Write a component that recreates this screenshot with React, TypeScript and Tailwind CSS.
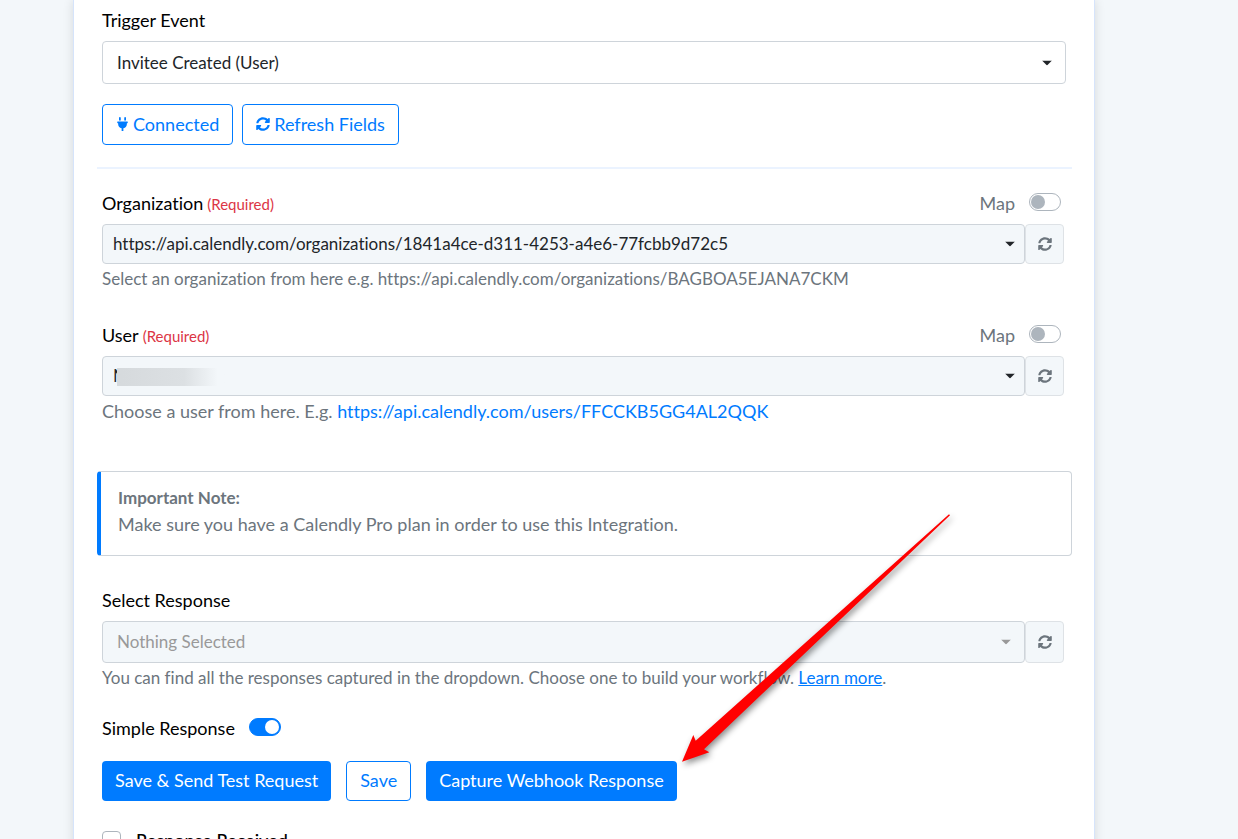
import { useState } from "react";
import type { ReactNode } from "react";
import { FaPlug, FaSyncAlt } from "react-icons/fa";

type SelectBoxProps = {
  id: string;
  value: string;
  className: string;
  caretClassName: string;
  disabled?: boolean;
  children?: ReactNode;
};

function SelectBox({ id, value, className, caretClassName, disabled, children }: SelectBoxProps) {
  return (
    <div className="relative min-w-0 flex-1">
      <select
        id={id}
        disabled={disabled}
        className={`block w-full appearance-none rounded border border-[#ced4da] text-[17px] opacity-100 ${className}`}
      >
        <option>{value}</option>
      </select>
      {children}
      <svg
        viewBox="0 0 10 5"
        className={`pointer-events-none absolute top-1/2 h-[5px] w-[10px] -translate-y-1/2 ${caretClassName}`}
      >
        <path d="M0 0h10L5 5z" fill="currentColor" />
      </svg>
    </div>
  );
}

function RefreshButton({ label }: { label: string }) {
  return (
    <button
      type="button"
      aria-label={label}
      className="flex w-[39px] items-center justify-center rounded border border-[#dee2e6] bg-[#f3f7fa] text-[#6c757d]"
    >
      <FaSyncAlt className="size-3.5" />
    </button>
  );
}

function Toggle({ id, defaultOn = false }: { id: string; defaultOn?: boolean }) {
  const [on, setOn] = useState(defaultOn);
  return (
    <input
      id={id}
      type="checkbox"
      role="switch"
      checked={on}
      onChange={() => setOn(!on)}
      className="mb-0.5 flex h-[18px] w-8 appearance-none items-center rounded-full border border-[#adb5bd] bg-white px-px before:size-3.5 before:rounded-full before:bg-[#adb5bd] checked:justify-end checked:border-[#007bff] checked:bg-[#007bff] checked:before:bg-white"
    />
  );
}

function RequiredLabel({ htmlFor, children }: { htmlFor: string; children: ReactNode }) {
  return (
    <label htmlFor={htmlFor} className="flex h-6 items-baseline gap-1">
      {children} <span className="text-[15px] text-[#dc3545]">(Required)</span>
    </label>
  );
}

function MapToggle({ id }: { id: string }) {
  return (
    <div className="mr-[3px] flex items-center gap-3.5">
      <label htmlFor={id} className="text-[#6c757d]">
        Map
      </label>
      <Toggle id={id} />
    </div>
  );
}

function Arrow() {
  return (
    <svg
      viewBox="0 0 280 265"
      className="pointer-events-none absolute bottom-[30px] left-full h-[265px] w-[280px] drop-shadow-[2px_3px_3px_rgba(0,0,0,0.45)]"
    >
      <path
        d="M272 8.3L273 9.3L27 243.3L32.3 246.3L5 255.7L16.3 229L18.7 234.7Z"
        fill="#ff0000"
      />
    </svg>
  );
}

export default function App() {
  return (
    <div className="h-screen overflow-hidden bg-[#f3f7fa] pr-[143px] pl-[73px] font-['Lato','Open_Sans',sans-serif] text-lg leading-6 text-black [font-variant-ligatures:none]">
      <main className="min-h-full border-x border-[#d6e4fb] bg-white pt-2 pr-[22px] pb-10 pl-[23px] shadow-[0_0_10px_rgba(0,0,0,0.12)]">
        <section className="pr-1.5 pl-[5px]">
          <label htmlFor="trigger-event">Trigger Event</label>
          <div className="mt-[9px] flex">
            <SelectBox
              id="trigger-event"
              value="Invitee Created (User)"
              className="h-[43px] bg-white px-3.5 text-[#212529]"
              caretClassName="right-3.5 text-[#212529]"
            />
          </div>
          <div className="mt-5 flex gap-[9px]">
            <button
              type="button"
              className="flex h-[41px] items-center gap-1 rounded border border-[#007bff] px-[13px] pb-0.5 text-[#007bff]"
            >
              <FaPlug className="h-3.5 w-[13px]" />
              Connected
            </button>
            <button
              type="button"
              className="flex h-[41px] items-center gap-1 rounded border border-[#007bff] px-[13px] pb-0.5 text-[#007bff]"
            >
              <FaSyncAlt className="size-3.5" />
              Refresh Fields
            </button>
          </div>
        </section>

        <hr className="mt-[22px] border-t-2 border-[#ebf3ff]" />

        <section className="mt-[22px] pr-2 pl-[5px]">
          <div className="flex items-center justify-between">
            <RequiredLabel htmlFor="organization">Organization</RequiredLabel>
            <MapToggle id="map-organization" />
          </div>
          <div className="mt-[9px] flex">
            <SelectBox
              id="organization"
              value="https://api.calendly.com/organizations/1841a4ce-d311-4253-a4e6-77fcbb9d72c5"
              className="h-10 bg-[#f3f7fa] px-2.5 text-[#212529]"
              caretClassName="right-2.5 text-[#212529]"
            />
            <RefreshButton label="Refresh organizations" />
          </div>
          <p className="mt-[3px] text-[17px] leading-6 text-[#6c757d]">
            Select an organization from here e.g. https://api.calendly.com/organizations/BAGBOA5EJANA7CKM
          </p>

          <div className="mt-8 flex items-center justify-between">
            <RequiredLabel htmlFor="user">User</RequiredLabel>
            <MapToggle id="map-user" />
          </div>
          <div className="mt-[9px] flex">
            <SelectBox
              id="user"
              value="N"
              className="h-10 bg-[#f3f7fa] px-2.5 text-[#212529]"
              caretClassName="right-2.5 text-[#212529]"
            >
              {/* the name is masked after its first stroke */}
              <span className="pointer-events-none absolute top-3 left-[15px] h-[18px] w-28 bg-linear-to-r from-[#d6dadd] from-5% via-[#dce0e3] via-60% to-[#f3f7fa] to-90%" />
            </SelectBox>
            <RefreshButton label="Refresh users" />
          </div>
          <p className="mt-[3px] leading-6 text-[#6c757d]">
            Choose a user from here. E.g.{" "}
            <a href="#users" className="text-[#007bff]">
              https://api.calendly.com/users/FFCCKB5GG4AL2QQK
            </a>
          </p>
        </section>

        <aside className="mt-12 rounded border border-l-4 border-[#ced4da] border-l-[#007bff] px-[17px] pt-3 pb-[17px] leading-[27px] text-[#6c757d]">
          <strong className="block text-[17px] font-bold">Important Note:</strong>
          <p>Make sure you have a Calendly Pro plan in order to use this Integration.</p>
        </aside>

        <section className="mt-8 pr-2 pl-[5px]">
          <label htmlFor="response">Select Response</label>
          <div className="mt-[9px] flex">
            <SelectBox
              id="response"
              value="Nothing Selected"
              disabled
              className="h-[42px] bg-[#f3f7fa] px-3.5 text-[#999999]"
              caretClassName="right-3.5 text-[#999999]"
            />
            <RefreshButton label="Refresh responses" />
          </div>
          <p className="mt-[3px] text-[17px] leading-6 text-[#6c757d]">
            You can find all the responses captured in the dropdown. Choose one to build your workflow.{" "}
            <a href="#learn-more" className="text-[#007bff] underline">
              Learn more
            </a>
            .
          </p>

          <div className="mt-[26px] flex items-center gap-3.5">
            <label htmlFor="simple-response">Simple Response</label>
            <Toggle id="simple-response" defaultOn />
          </div>

          <div className="mt-[21px] flex gap-[15px]">
            <button type="button" className="h-10 rounded bg-[#007bff] px-[13px] pb-0.5 text-white">
              Save &amp; Send Test Request
            </button>
            <button
              type="button"
              className="h-10 rounded border border-[#007bff] px-[13px] pb-0.5 text-[#007bff]"
            >
              Save
            </button>
            <div className="relative">
              <button type="button" className="h-10 rounded bg-[#007bff] px-[13px] pb-0.5 text-white">
                Capture Webhook Response
              </button>
              <Arrow />
            </div>
          </div>

          <div className="mt-[27px] flex items-center gap-[15px]">
            <input
              id="response-received"
              type="checkbox"
              className="size-[19px] appearance-none rounded border border-[#adb5bd] bg-white checked:bg-[#007bff]"
            />
            <label htmlFor="response-received" className="font-medium">
              Response Received
            </label>
          </div>
        </section>
      </main>
    </div>
  );
}
